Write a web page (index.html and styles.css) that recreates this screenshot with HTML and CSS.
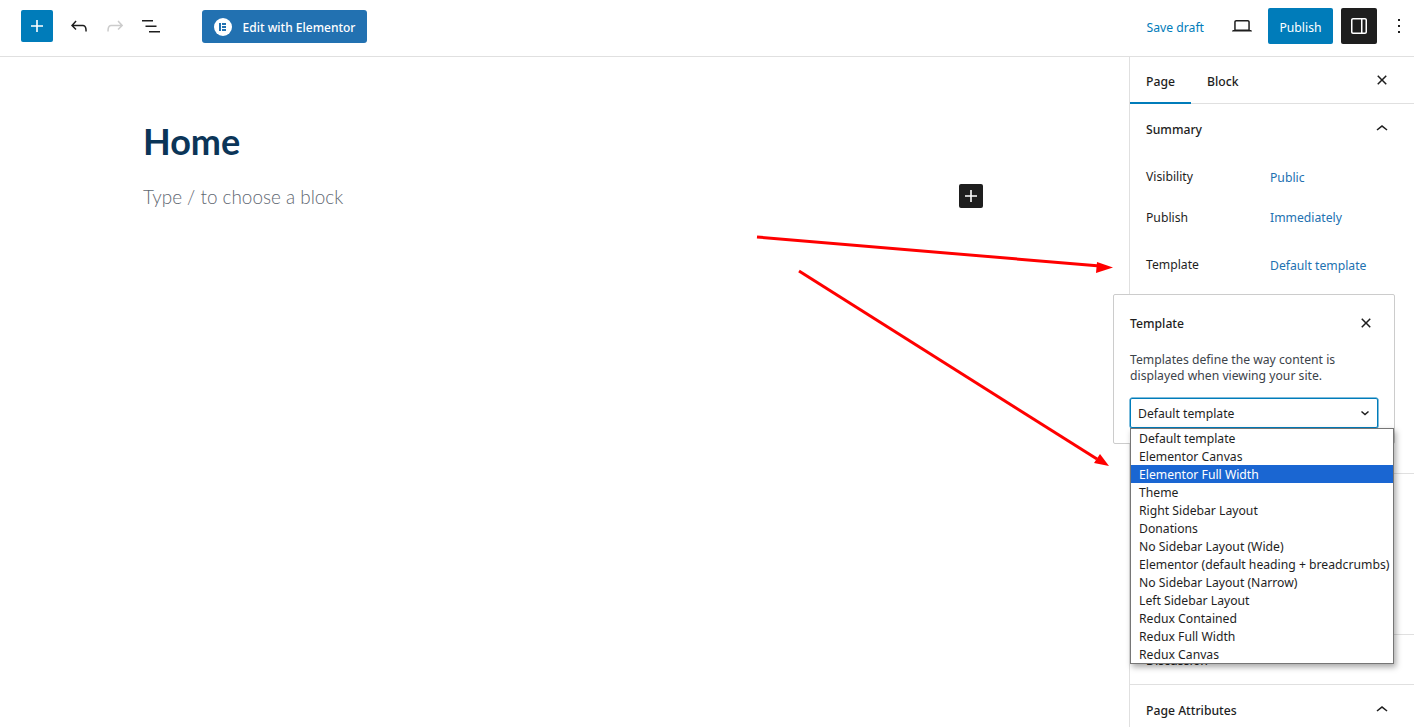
FILE: index.html
```html
<!DOCTYPE html>
<html lang="en">
<head>
    <meta charset="UTF-8">
    <meta name="viewport" content="width=device-width, initial-scale=1.0">
    <title>Edit Page</title>
    <link rel="stylesheet" href="styles.css">
</head>
<body>
    <div class="header">
        <div class="toolbar">
            <button class="btn-inserter"><svg class="icon" viewBox="0 0 24 24"><path d="M18 11.2h-5.2V6h-1.6v5.2H6v1.6h5.2V18h1.6v-5.2H18z"/></svg></button>
            <button class="btn-tool"><svg class="icon" viewBox="0 0 24 24"><path d="M18.3 11.7c-.6-.6-1.4-.9-2.3-.9H6.7l2.9-3.3-1.1-1-4.5 5L8.5 16l1-1-2.7-2.7H16c.5 0 .9.2 1.3.5 1 1 1 3.4 1 4.5v.3h1.5v-.2c0-1.5 0-4.3-1.5-5.7z"/></svg></button>
            <button class="btn-tool disabled"><svg class="icon" viewBox="0 0 24 24"><path d="M15.6 6.5l-1.1 1 2.9 3.3H8c-.9 0-1.7.3-2.3.9-1.4 1.5-1.4 4.2-1.4 5.6v.2h1.5v-.3c0-1.1 0-3.5 1-4.5.3-.3.7-.5 1.3-.5h9.2L14.5 15l1.1 1.1 4.6-4.6-4.6-5z"/></svg></button>
            <button class="btn-tool"><svg class="icon" viewBox="0 0 24 24"><path d="M3 6h11v1.5H3V6zm3.5 5.5h11V13h-11v-1.5zM21 17H10v1.5h11V17z"/></svg></button>
            <button class="btn-elementor">
                <span class="elementor-logo"><span class="logo-bar"></span><span class="logo-lines"><i></i><i></i><i></i></span></span>
                <span class="elementor-label">Edit with Elementor</span>
            </button>
        </div>
        <div class="settings">
            <span class="save-draft">Save draft</span>
            <button class="btn-tool preview"><svg class="icon" viewBox="0 0 24 24"><path d="M20.5 16h-.7V8c0-1.1-.9-2-2-2H6.2c-1.1 0-2 .9-2 2v8h-.7c-.8 0-1.5.7-1.5 1.5h20c0-.8-.7-1.5-1.5-1.5zM5.7 8c0-.3.2-.5.5-.5h11.6c.3 0 .5.2.5.5v7.6H5.7V8z"/></svg></button>
            <button class="btn-publish">Publish</button>
            <button class="btn-sidebar"><svg class="icon" viewBox="0 0 24 24"><path d="M18 4H6c-1.1 0-2 .9-2 2v12c0 1.1.9 2 2 2h12c1.1 0 2-.9 2-2V6c0-1.1-.9-2-2-2zm-4 14.5H6c-.3 0-.5-.2-.5-.5V6c0-.3.2-.5.5-.5h8v13zm4.5-.5c0 .3-.2.5-.5.5h-2.5v-13H18c.3 0 .5.2.5.5v12z"/></svg></button>
            <button class="btn-more"><svg class="icon" viewBox="0 0 24 24"><path d="M13 19h-2v-2h2v2zm0-6h-2v-2h2v2zm0-6h-2V5h2v2z"/></svg></button>
        </div>
    </div>

    <div class="main">
        <div class="canvas">
            <div class="editor">
                <h1 class="post-title">Home</h1>
                <div class="block-row">
                    <p class="placeholder">Type / to choose a block</p>
                    <button class="btn-block-add"><svg class="icon" viewBox="0 0 24 24"><path d="M18 11.2h-5.2V6h-1.6v5.2H6v1.6h5.2V18h1.6v-5.2H18z"/></svg></button>
                </div>
            </div>
        </div>

        <div class="sidebar">
            <div class="tabs">
                <span class="tab active">Page</span>
                <span class="tab">Block</span>
                <svg class="icon tabs-close" viewBox="0 0 24 24"><path d="M12 13.06l3.712 3.713 1.061-1.06L13.061 12l3.712-3.712-1.06-1.06L12 10.938 8.288 7.227l-1.061 1.06L10.939 12l-3.712 3.712 1.06 1.061L12 13.061z"/></svg>
            </div>
            <div class="panel panel-summary">
                <div class="panel-head">
                    <span>Summary</span>
                    <svg class="icon" viewBox="0 0 24 24"><path d="M6.5 12.4L12 8l5.5 4.4-.9 1.2L12 10l-4.5 3.6-1-1.2z"/></svg>
                </div>
                <div class="row row-visibility"><span class="row-label">Visibility</span><span class="row-value">Public</span></div>
                <div class="row row-publish"><span class="row-label">Publish</span><span class="row-value">Immediately</span></div>
                <div class="row row-template"><span class="row-label">Template</span><span class="row-value">Default template</span></div>
            </div>
            <div class="panel panel-hidden"></div>
            <div class="panel">
                <div class="panel-head"><span>Discussion</span></div>
            </div>
            <div class="panel">
                <div class="panel-head">
                    <span>Page Attributes</span>
                    <svg class="icon" viewBox="0 0 24 24"><path d="M6.5 12.4L12 8l5.5 4.4-.9 1.2L12 10l-4.5 3.6-1-1.2z"/></svg>
                </div>
            </div>
        </div>
    </div>

    <!-- template popover, lies over the sidebar -->
    <div class="popover">
        <div class="popover-head">
            <span>Template</span>
            <svg class="icon" viewBox="0 0 24 24"><path d="M12 13.06l3.712 3.713 1.061-1.06L13.061 12l3.712-3.712-1.06-1.06L12 10.938 8.288 7.227l-1.061 1.06L10.939 12l-3.712 3.712 1.06 1.061L12 13.061z"/></svg>
        </div>
        <p class="popover-text">Templates define the way content is displayed when viewing your site.</p>
        <div class="select">
            <span>Default template</span>
            <svg class="select-arrow" viewBox="0 0 12 12"><path d="M2.5 4.5L6 7.5l3.5-3" /></svg>
        </div>
    </div>

    <ul class="dropdown">
        <li>Default template</li>
        <li>Elementor Canvas</li>
        <li class="selected">Elementor Full Width</li>
        <li>Theme</li>
        <li>Right Sidebar Layout</li>
        <li>Donations</li>
        <li>No Sidebar Layout (Wide)</li>
        <li>Elementor (default heading + breadcrumbs)</li>
        <li>No Sidebar Layout (Narrow)</li>
        <li>Left Sidebar Layout</li>
        <li>Redux Contained</li>
        <li>Redux Full Width</li>
        <li>Redux Canvas</li>
    </ul>

    <!-- red annotation arrows -->
    <svg class="arrows" viewBox="0 0 1414 727">
        <path d="M757 237L1100 266" stroke="#f00" stroke-width="3" fill="none"/>
        <path d="M1113 267.5L1096 273L1097 262z" fill="#f00"/>
        <path d="M799 271L1097 459" stroke="#f00" stroke-width="3" fill="none"/>
        <path d="M1109 466L1094 463L1100 454z" fill="#f00"/>
    </svg>
</body>
</html>
```

FILE: styles.css
```css
* { box-sizing: border-box; }
html, body { height: 100%; }
body {
    margin: 0;
    overflow: hidden;
    position: relative;
    background: #fff;
    color: #1e1e1e;
    font-family: "Noto Sans", sans-serif;
    font-size: 12.2px;
}
button {
    border: 0;
    padding: 0;
    background: none;
    font: inherit;
    color: inherit;
    display: flex;
    align-items: center;
    justify-content: center;
}
.icon { width: 24px; height: 24px; fill: currentColor; display: block; }

/* header */
.header {
    height: 57px;
    border-bottom: 1px solid #e0e0e0;
    display: flex;
    justify-content: space-between;
    align-items: flex-start;
    padding: 8px 0 0 21px;
}
.toolbar, .settings { display: flex; align-items: center; height: 36px; }
.btn-inserter {
    width: 32px;
    height: 32px;
    background: #007cba;
    color: #fff;
    border-radius: 2px;
    margin-right: 8px;
}
.btn-tool { width: 36px; height: 36px; }
.btn-tool.disabled { color: #ccc; }
.btn-elementor {
    width: 165px;
    height: 33px;
    margin-left: 33px;
    margin-top: 1px;
    background: #2271b1;
    color: #fff;
    border-radius: 3px;
    font-weight: 500;
    gap: 11px;
}
.elementor-label { font-size: 12px; padding-top: 2px; }
.elementor-logo {
    width: 18px;
    height: 18px;
    border-radius: 50%;
    background: #fff;
    display: flex;
    align-items: center;
    justify-content: center;
    gap: 1px;
}
.logo-bar { width: 2px; height: 8px; background: #2271b1; }
.logo-lines { display: flex; flex-direction: column; justify-content: space-between; height: 8px; }
.logo-lines i { display: block; width: 4px; height: 2px; background: #2271b1; }

.save-draft { color: #007cba; margin-right: 20px; padding-top: 2px; }
.btn-tool.preview { margin-right: 8px; }
.btn-publish {
    width: 65px;
    height: 36px;
    padding-top: 2px;
    background: #007cba;
    color: #fff;
    border-radius: 2px;
    margin-right: 8px;
}
.btn-sidebar {
    width: 36px;
    height: 36px;
    background: #1e1e1e;
    color: #fff;
    border-radius: 2px;
    margin-right: 4px;
}
.btn-more { width: 36px; height: 36px; margin-right: -3px; }

/* main area */
.main { display: flex; height: 670px; }
.canvas { flex: 1; padding: 62px 0 0 143px; }
.editor { width: 840px; }
.post-title {
    margin: 0;
    font-family: Lato, sans-serif;
    font-size: 36px;
    font-weight: 700;
    line-height: 44px;
    color: #0b3558;
}
.block-row {
    margin-top: 21px;
    display: flex;
    justify-content: space-between;
    align-items: center;
}
.placeholder {
    margin: 0;
    font-family: Lato, sans-serif;
    font-weight: 300;
    font-size: 18.9px;
    color: #5f6872;
}
.btn-block-add {
    width: 24px;
    height: 24px;
    background: #1e1e1e;
    color: #fff;
    border-radius: 2px;
}

/* sidebar */
.sidebar { width: 285px; border-left: 1px solid #e0e0e0; }
.tabs {
    height: 47px;
    border-bottom: 1px solid #e0e0e0;
    display: flex;
    align-items: stretch;
}
.tab {
    padding: 2px 16px 0;
    height: 47px;
    display: flex;
    align-items: center;
    font-weight: 500;
}
.tab.active { box-shadow: inset 0 -2px 0 #007cba; }
.tabs-close { margin: 11px 20px 0 auto; }
.panel { border-bottom: 1px solid #e0e0e0; }
.panel-head {
    height: 49px;
    padding: 0 20px 0 16px;
    display: flex;
    justify-content: space-between;
    align-items: center;
    font-weight: 500;
}
.panel-head span { padding-top: 2px; }
.panel-summary { height: 370px; }
.row { display: flex; align-items: center; padding-left: 16px; height: 20px; }
.row-label { width: 124px; }
.row-value { color: #2271b1; padding-top: 2px; }
.row-publish .row-value { padding-top: 0; }
.row-visibility { margin-top: 13px; }
.row-publish { margin-top: 21px; }
.row-template { margin-top: 27px; }
.panel-hidden { height: 161px; }

/* popover */
.popover {
    position: absolute;
    left: 1113px;
    top: 294px;
    width: 282px;
    height: 150px;
    background: #fff;
    border: 1px solid #ccc;
    border-radius: 2px;
    padding: 16px;
}
.popover-head {
    display: flex;
    justify-content: space-between;
    align-items: center;
    height: 24px;
    font-weight: 500;
}
.popover-text { margin: 17px 0 0; line-height: 16px; width: 240px; color: #3c434a; }
.select {
    margin: 14px 0 0;
    width: 248px;
    height: 30px;
    border: 1px solid #007cba;
    box-shadow: 0 0 0 .5px #007cba;
    border-radius: 2px;
    display: flex;
    justify-content: space-between;
    align-items: center;
    padding: 0 6px 0 7px;
}
.select-arrow { width: 12px; height: 12px; fill: none; stroke: #1e1e1e; stroke-width: 1.5; }

/* native select list */
.dropdown {
    position: absolute;
    left: 1130px;
    top: 428px;
    width: 264px;
    height: 236px;
    margin: 0;
    padding: 0;
    list-style: none;
    background: #fff;
    border: 1px solid #767676;
    box-shadow: 2px 3px 6px rgba(0,0,0,0.35);
    overflow: hidden;
}
.dropdown li {
    height: 18px;
    line-height: 20px;
    padding-left: 8px;
    white-space: nowrap;
}
.dropdown .selected { background: #1a66d2; color: #fff; }

.arrows {
    position: absolute;
    left: 0;
    top: 0;
    width: 1414px;
    height: 727px;
    pointer-events: none;
}
```
